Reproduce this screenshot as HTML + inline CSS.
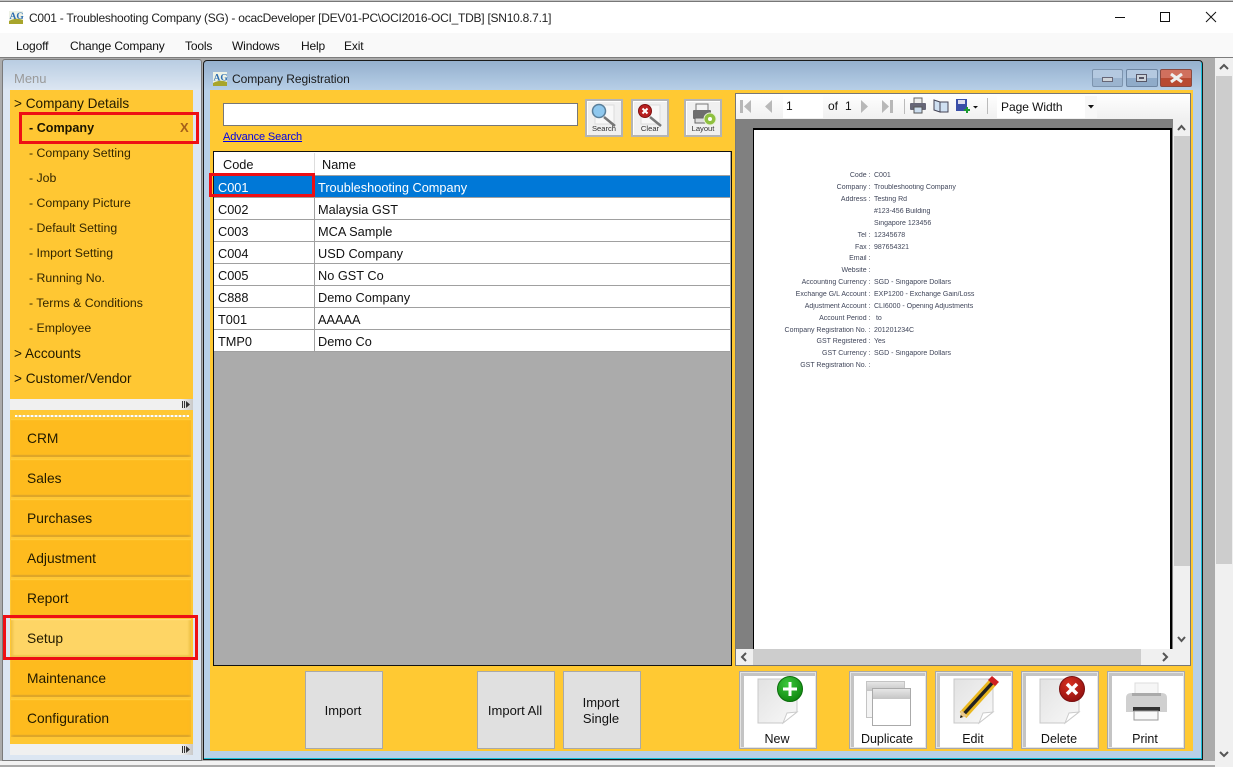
<!DOCTYPE html>
<html><head><meta charset="utf-8"><title>Company Registration</title>
<style>
html,body{margin:0;padding:0;width:1233px;height:767px;overflow:hidden;background:#fff}
body{position:relative;font-family:"Liberation Sans",sans-serif;font-size:13px;color:#111}
.b{position:absolute;box-sizing:border-box}
.t{position:absolute;white-space:nowrap;line-height:16px}
.nav{position:absolute;left:11px;width:180px;height:38px;box-sizing:border-box;background:#febb1e;box-shadow:inset 0 2px 1px -1px #ffd040,inset 2px 0 2px -1px #f6b92a,inset -2px 0 2px -1px #f6b92a,inset 0 -3px 1px -1px #d9a32c;font-size:13.8px;line-height:40px;padding-left:16px;color:#221a00}
.ib{position:absolute;top:671px;width:78px;height:78px;box-sizing:border-box;background:#fff;border:1px solid #a8a8a8;box-shadow:inset 0 0 0 1px #e4e4e4,inset 4px 4px 0 #c4c4c4}
.ib span{position:absolute;left:0;right:2px;bottom:1px;text-align:center;line-height:16px;color:#111;font-size:12.5px}
.ib svg{position:absolute;left:0;top:0}
.gb{position:absolute;top:671px;width:78px;height:78px;box-sizing:border-box;background:#e0e0e0;border:1px solid #a9a9a9;display:flex;align-items:center;justify-content:center;text-align:center;line-height:16px;padding:1px 2px 0 0}
.sb{position:absolute;top:99px;width:38px;height:38px;box-sizing:border-box;background:#f0f0f0;border:2px solid #b4b4b4;box-shadow:inset 1px 1px 0 #fff}
.sb span{position:absolute;left:0;right:0;top:22px;text-align:center;font-size:7.6px;line-height:11px;color:#333}
.sb svg{position:absolute;left:0;top:0}
.m{font-size:12px;letter-spacing:-.15px}
.s{font-size:12.3px;color:#332600}
.h{font-size:13.6px;color:#221a00}
.r{position:absolute;left:214px;width:516px;height:22px;border-bottom:1px solid #a0a0a0;box-sizing:border-box;background:#fff;line-height:23px;font-size:12.75px}
.r i{position:absolute;left:100px;top:0;width:1px;height:22px;background:#a0a0a0}
.r b{font-weight:normal;position:absolute;left:4px;white-space:nowrap}
.r u{text-decoration:none;position:absolute;left:104px;white-space:nowrap}
.rl,.rv{position:absolute;font-size:7px;line-height:12px;white-space:nowrap;color:#40465a;filter:blur(.3px)}
.rl{right:362.5px;text-align:right}
.rv{left:874px}
.red{position:absolute;box-sizing:border-box;border:3px solid #ee0f14}
</style></head><body>

<div class="b" style="left:0;top:0;width:1233px;height:2px;background:#c4c4c4;border-bottom:1px solid #777"></div>
<svg class="b" style="left:8px;top:10px" width="16" height="14" viewBox="0 0 16 14"><rect x="1" y="1" width="14" height="12" fill="#eef2e6"/><text x="1.5" y="9" font-family="Liberation Serif" font-weight="bold" font-size="9.5" fill="#2f6fb0">AG</text><path d="M1 11Q8 7 15 10V14H1Z" fill="#a8a52c"/></svg>
<div class="t" style="left:29px;top:10px;font-size:12px;letter-spacing:-.25px;color:#222">C001 - Troubleshooting Company (SG) - ocacDeveloper [DEV01-PC\OCI2016-OCI_TDB] [SN10.8.7.1]</div>
<svg class="b" style="left:1110px;top:10px" width="110" height="16" viewBox="0 0 110 16" fill="none" stroke="#111" stroke-width="1"><path d="M5 7.5H15"/><rect x="50.5" y="2.5" width="9" height="9"/><path d="M96 2L106 12M106 2L96 12"/></svg>

<div class="b" style="left:0;top:33px;width:1233px;height:25px;background:#f9f9f9;border-bottom:1px solid #7d7d7d"></div>
<div class="t m" style="left:16px;top:38px">Logoff</div>
<div class="t m" style="left:70px;top:38px">Change Company</div>
<div class="t m" style="left:185px;top:38px">Tools</div>
<div class="t m" style="left:232px;top:38px">Windows</div>
<div class="t m" style="left:301px;top:38px">Help</div>
<div class="t m" style="left:344px;top:38px">Exit</div>

<!-- left panel -->
<div class="b" style="left:0;top:58px;width:1233px;height:703px;background:#ababab"></div>
<div class="b" style="left:2px;top:59px;width:200px;height:702px;background:linear-gradient(#b9cde2,#dce6f2 30px);border:1px solid #7a7a7a;border-radius:3px 3px 0 0"></div>
<div class="t" style="left:14px;top:71px;color:#9a9a9a">Menu</div>
<div class="b" style="left:10px;top:90px;width:183px;height:309px;background:#ffc733"></div>
<div class="t h" style="left:14px;top:96px">&gt; Company Details</div>
<div class="t" style="left:29px;top:120px;font-weight:bold;font-size:12.6px;color:#1a1400">- Company</div>
<div class="t" style="left:180px;top:120px;font-weight:bold;color:#a5601a">X</div>
<div class="t s" style="left:29px;top:145px">- Company Setting</div>
<div class="t s" style="left:29px;top:170px">- Job</div>
<div class="t s" style="left:29px;top:195px">- Company Picture</div>
<div class="t s" style="left:29px;top:220px">- Default Setting</div>
<div class="t s" style="left:29px;top:245px">- Import Setting</div>
<div class="t s" style="left:29px;top:270px">- Running No.</div>
<div class="t s" style="left:29px;top:295px">- Terms &amp; Conditions</div>
<div class="t s" style="left:29px;top:320px">- Employee</div>
<div class="t h" style="left:14px;top:346px">&gt; Accounts</div>
<div class="t h" style="left:14px;top:371px">&gt; Customer/Vendor</div>
<div class="b" style="left:10px;top:399px;width:183px;height:11px;background:#f0f0f0"></div>
<div class="b" style="left:181px;top:399px;width:12px;height:11px;background:linear-gradient(90deg,#f0f0f0,#c8c8c8)"></div>
<svg class="b" style="left:182px;top:401px" width="9" height="7"><path d="M0 0H1V7H0ZM2 0H3V7H2ZM4 0L8 3.5L4 7Z" fill="#333"/></svg>
<div class="b" style="left:10px;top:410px;width:183px;height:345px;background:#ffc733"></div>
<div class="b" style="left:15px;top:415px;width:174px;height:2px;background-image:repeating-linear-gradient(90deg,#fff 0 2px,#e8d8a0 2px 4px)"></div>
<div class="nav" style="top:419px">CRM</div>
<div class="nav" style="top:459px">Sales</div>
<div class="nav" style="top:499px">Purchases</div>
<div class="nav" style="top:539px">Adjustment</div>
<div class="nav" style="top:579px">Report</div>
<div class="nav" style="top:619px;background:#fed565;box-shadow:inset 0 2px 1px -1px #fedf85,inset 3px 0 2px -1px #eec048,inset -3px 0 2px -1px #eec048,inset 0 -3px 1px -1px #f0c850">Setup</div>
<div class="nav" style="top:659px">Maintenance</div>
<div class="nav" style="top:699px">Configuration</div>
<div class="b" style="left:10px;top:744px;width:183px;height:11px;background:#f0f0f0"></div>
<div class="b" style="left:181px;top:744px;width:12px;height:11px;background:linear-gradient(90deg,#f0f0f0,#c8c8c8)"></div>
<svg class="b" style="left:182px;top:746px" width="9" height="7"><path d="M0 0H1V7H0ZM2 0H3V7H2ZM4 0L8 3.5L4 7Z" fill="#333"/></svg>

<!-- window -->
<div class="b" style="left:203px;top:60px;width:1000px;height:700px;background:linear-gradient(#95b0ce,#b8d0e8 30px);border:1px solid #1a1a1a;box-shadow:inset -1px -1px 0 #19c0d8;border-radius:4px 4px 0 0"></div>
<svg class="b" style="left:212px;top:71px" width="16" height="15" viewBox="0 0 16 15"><rect x="1" y="1" width="14" height="13" fill="#eef2e6"/><text x="1.5" y="9.5" font-family="Liberation Serif" font-weight="bold" font-size="9.5" fill="#2f6fb0">AG</text><path d="M1 12Q8 8 15 11V15H1Z" fill="#a8a52c"/></svg>
<div class="t" style="left:232px;top:71px;font-size:12px;letter-spacing:-.05px;color:#1a1a1a">Company Registration</div>
<div class="b" style="left:1092px;top:69px;width:31px;height:18px;border:1px solid #7d94ae;border-radius:2px;background:linear-gradient(#b4c9e0 50%,#9bb4cf 50%)"></div>
<div class="b" style="left:1102px;top:77px;width:11px;height:5px;background:#cfd4d9;border:1px solid #667"></div>
<div class="b" style="left:1126px;top:69px;width:32px;height:18px;border:1px solid #6e86a2;border-radius:2px;background:linear-gradient(#b4c9e0 50%,#8fabc9 50%)"></div>
<div class="b" style="left:1136px;top:74px;width:11px;height:8px;background:#d8dde2;border:1px solid #556;box-shadow:inset 0 0 0 2px #ccd3da,inset 0 0 0 3px #556"></div>
<div class="b" style="left:1160px;top:69px;width:32px;height:18px;border:1px solid #8a4a40;border-radius:2px;background:linear-gradient(#d0705e 50%,#b84a32 50%)"></div>
<svg class="b" style="left:1169px;top:73px" width="15" height="10"><path d="M2 1L13 9M13 1L2 9" stroke="#eee" stroke-width="3"/></svg>

<div class="b" style="left:210px;top:90px;width:983px;height:661px;background:#ffc933"></div>

<!-- search -->
<div class="b" style="left:223px;top:103px;width:355px;height:23px;background:#fff;border:1px solid #777"></div>
<div class="t" style="left:223px;top:129px;font-size:11px;letter-spacing:-.12px;color:#0000e8;text-decoration:underline">Advance Search</div>
<div class="sb" style="left:585px"><svg width="34" height="34"><rect x="8" y="4" width="19" height="19" fill="#f8f8f8" stroke="#ddd"/><path d="M17 16L28 25" stroke="#777" stroke-width="2.5"/><circle cx="12" cy="10" r="6.5" fill="#8fc8ee" stroke="#5a7f9a" stroke-width="1.5"/></svg><span>Search</span></div>
<div class="sb" style="left:631px"><svg width="34" height="34"><rect x="8" y="4" width="19" height="19" fill="#f8f8f8" stroke="#ddd"/><path d="M17 16L28 25" stroke="#777" stroke-width="2.5"/><circle cx="12" cy="10" r="6.5" fill="#b82020" stroke="#801010"/><path d="M9.5 7.5L14.5 12.5M14.5 7.5L9.5 12.5" stroke="#fff" stroke-width="2"/></svg><span>Clear</span></div>
<div class="sb" style="left:684px"><svg width="34" height="34"><rect x="10" y="3" width="12" height="7" fill="#f4f4f4" stroke="#777"/><rect x="7" y="9" width="18" height="9" rx="1" fill="#6e6e6e"/><rect x="9" y="17" width="13" height="5" fill="#ddd" stroke="#666"/><circle cx="24" cy="18" r="6" fill="#8fc040" stroke="#e8f0d8"/><circle cx="24" cy="18" r="2" fill="#fff"/></svg><span>Layout</span></div>

<!-- table -->
<div class="b" style="left:213px;top:151px;width:519px;height:515px;background:#ababab;border:1px solid #111"></div>
<div class="b" style="left:214px;top:152px;width:516px;height:24px;background:#fff;border-bottom:1px solid #a0a0a0"></div>
<div class="b" style="left:314px;top:153px;width:1px;height:22px;background:#ddd"></div>
<div class="t" style="left:223px;top:157px;font-size:12.75px">Code</div>
<div class="t" style="left:322px;top:157px;font-size:12.75px">Name</div>
<div class="r" style="top:176px;background:#0078d7;color:#fff"><b>C001</b><u>Troubleshooting Company</u></div>
<div class="r" style="top:198px"><b>C002</b><i></i><u>Malaysia GST</u></div>
<div class="r" style="top:220px"><b>C003</b><i></i><u>MCA Sample</u></div>
<div class="r" style="top:242px"><b>C004</b><i></i><u>USD Company</u></div>
<div class="r" style="top:264px"><b>C005</b><i></i><u>No GST Co</u></div>
<div class="r" style="top:286px"><b>C888</b><i></i><u>Demo Company</u></div>
<div class="r" style="top:308px"><b>T001</b><i></i><u>AAAAA</u></div>
<div class="r" style="top:330px"><b>TMP0</b><i></i><u>Demo Co</u></div>

<!-- report viewer -->
<div class="b" style="left:735px;top:93px;width:456px;height:573px;background:#f0f0f0;border:1px solid #777"></div>
<div class="b" style="left:736px;top:94px;width:454px;height:25px;background:linear-gradient(#fff,#f0f0f0)"></div>
<div class="b" style="left:736px;top:119px;width:437px;height:530px;background:#808080"></div>
<div class="b" style="left:753px;top:128px;width:419px;height:521px;background:#fff;border:1px solid #000;border-width:2px 2px 0 1px"></div>
<div class="b" style="left:783px;top:94px;width:40px;height:24px;background:#fff"></div>
<div class="t" style="left:786px;top:98px;font-size:12px;color:#111">1</div>
<div class="t" style="left:828px;top:98px;font-size:12px">of</div>
<div class="t" style="left:845px;top:98px;font-size:12px">1</div>
<svg class="b" style="left:738px;top:99px" width="170" height="16" fill="#b8b8b8"><path d="M2 1H5V14H2ZM6 7.5L13 1V14Z"/><path d="M27 7.5L34 1V14Z"/><path d="M123 1L130 7.5L123 14Z"/><path d="M144 1L151 7.5L144 14ZM152 1H155V14H152Z"/><path d="M166 0H167V15H166Z" fill="#bbb"/></svg>
<svg class="b" style="left:909px;top:97px" width="75" height="18"><rect x="5" y="1" width="8" height="6" fill="#eee" stroke="#666"/><rect x="1" y="6" width="16" height="7" rx="1" fill="#667"/><rect x="5" y="10" width="8" height="6" fill="#cde" stroke="#555"/><path d="M25 3L31 5V15L25 13ZM31 5H39V15H31" fill="#cfe0f2" stroke="#445"/><rect x="47" y="2" width="11" height="12" fill="#3a4fa8"/><rect x="49" y="3" width="7" height="4" fill="#dde"/><path d="M55 13H61M58 10V16" stroke="#1c9a30" stroke-width="2"/><path d="M64 9H69L66.5 11.5Z" fill="#111"/></svg>
<div class="b" style="left:987px;top:98px;width:1px;height:16px;background:#bbb"></div>
<div class="b" style="left:997px;top:96px;width:88px;height:22px;background:#fff"></div>
<div class="b" style="left:1085px;top:96px;width:12px;height:22px;background:#f7f7f7"></div>
<div class="t" style="left:1001px;top:99px;font-size:12px;letter-spacing:-.05px">Page Width</div>
<svg class="b" style="left:1088px;top:105px" width="7" height="4"><path d="M0 0H6L3 3.5Z" fill="#111"/></svg>

<!-- inner scrollbars -->
<div class="b" style="left:1173px;top:119px;width:17px;height:530px;background:#f0f0f0"></div>
<div class="b" style="left:1174px;top:136px;width:16px;height:430px;background:#cdcdcd"></div>
<svg class="b" style="left:1173px;top:119px" width="17" height="530" fill="none" stroke="#555" stroke-width="2"><path d="M5 11L8.5 7L12 11M5 518L8.5 522L12 518"/></svg>
<div class="b" style="left:736px;top:649px;width:454px;height:16px;background:#f0f0f0"></div>
<div class="b" style="left:753px;top:649px;width:388px;height:16px;background:#cdcdcd"></div>
<svg class="b" style="left:736px;top:649px" width="440" height="16" fill="none" stroke="#555" stroke-width="2"><path d="M10 4L6 8L10 12M427 4L431 8L427 12"/></svg>

<!-- report text -->
<div class="rl" style="top:170px">Code :</div><div class="rv" style="top:170px">C001</div>
<div class="rl" style="top:182px">Company :</div><div class="rv" style="top:182px">Troubleshooting Company</div>
<div class="rl" style="top:194px">Address :</div><div class="rv" style="top:194px">Testing Rd</div>
<div class="rv" style="top:206px">#123-456 Building</div>
<div class="rv" style="top:218px">Singapore 123456</div>
<div class="rl" style="top:230px">Tel :</div><div class="rv" style="top:230px">12345678</div>
<div class="rl" style="top:242px">Fax :</div><div class="rv" style="top:242px">987654321</div>
<div class="rl" style="top:253px">Email :</div>
<div class="rl" style="top:265px">Website :</div>
<div class="rl" style="top:277px">Accounting Currency :</div><div class="rv" style="top:277px">SGD - Singapore Dollars</div>
<div class="rl" style="top:289px">Exchange G/L Account :</div><div class="rv" style="top:289px">EXP1200 - Exchange Gain/Loss</div>
<div class="rl" style="top:301px">Adjustment Account :</div><div class="rv" style="top:301px">CLI6000 - Opening Adjustments</div>
<div class="rl" style="top:313px">Account Period :</div><div class="rv" style="top:313px">&nbsp;to</div>
<div class="rl" style="top:325px">Company Registration No. :</div><div class="rv" style="top:325px">201201234C</div>
<div class="rl" style="top:336px">GST Registered :</div><div class="rv" style="top:336px">Yes</div>
<div class="rl" style="top:348px">GST Currency :</div><div class="rv" style="top:348px">SGD - Singapore Dollars</div>
<div class="rl" style="top:360px">GST Registration No. :</div>

<!-- bottom buttons -->
<div class="gb" style="left:305px">Import</div>
<div class="gb" style="left:477px">Import All</div>
<div class="gb" style="left:563px">Import<br>Single</div>

<svg width="0" height="0" style="position:absolute"><defs><linearGradient id="pg" x1="0" y1="0" x2="1" y2="1"><stop offset="0" stop-color="#e2e2e2"/><stop offset="1" stop-color="#f8f8f8"/></linearGradient><linearGradient id="tb" x1="0" y1="0" x2="0" y2="1"><stop offset="0" stop-color="#e6e6e6"/><stop offset="1" stop-color="#c4c4c4"/></linearGradient><radialGradient id="gc" cx=".4" cy=".3" r=".8"><stop offset="0" stop-color="#3cc83c"/><stop offset="1" stop-color="#0a800a"/></radialGradient><radialGradient id="rc" cx=".4" cy=".3" r=".8"><stop offset="0" stop-color="#d83020"/><stop offset="1" stop-color="#8c0e0e"/></radialGradient></defs></svg>

<div class="ib" style="left:739px"><svg width="76" height="56"><path d="M18 7H57V40L43 51H18Z" fill="url(#pg)" stroke="#c8c8c8"/><path d="M43 51L47 41L57 40Z" fill="#fff" stroke="#ccc"/><circle cx="50" cy="17" r="12.5" fill="url(#gc)" stroke="#0c6c0c"/><path d="M50 10V24M43 17H57" stroke="#fff" stroke-width="3"/></svg><span>New</span></div>
<div class="ib" style="left:849px"><svg width="76" height="56"><rect x="16.500" y="9.500" width="38" height="36" fill="#f4f4f4" stroke="#c4c4c4"/><rect x="17" y="10" width="37" height="9" fill="url(#tb)"/><rect x="22.500" y="16.500" width="38" height="37" fill="#fff" stroke="#aaa"/><rect x="23" y="17" width="37" height="10" fill="url(#tb)"/></svg><span>Duplicate</span></div>
<div class="ib" style="left:935px"><svg width="76" height="56"><path d="M18 7H57V40L43 51H18Z" fill="url(#pg)" stroke="#c8c8c8"/><path d="M43 51L47 41L57 40Z" fill="#fff" stroke="#ccc"/><path d="M27 43L58 9" stroke="#eab820" stroke-width="9"/><path d="M27 43L58 9" stroke="#222" stroke-width="3.500"/><path d="M56 4L63 10L59 14L52 8Z" fill="#d02020"/><path d="M24 46L25 38L32 44Z" fill="#e8c88a"/><path d="M24 46L24.800 43L27 45Z" fill="#111"/></svg><span>Edit</span></div>
<div class="ib" style="left:1021px"><svg width="76" height="56"><path d="M18 7H57V40L43 51H18Z" fill="url(#pg)" stroke="#c8c8c8"/><path d="M43 51L47 41L57 40Z" fill="#fff" stroke="#ccc"/><circle cx="50" cy="17" r="12.5" fill="url(#rc)" stroke="#7a1010"/><path d="M45 12L55 22M55 12L45 22" stroke="#fff" stroke-width="3.500"/></svg><span>Delete</span></div>
<div class="ib" style="left:1107px"><svg width="76" height="56"><rect x="27" y="11" width="23" height="13" fill="#f6f6f6" stroke="#ddd"/><path d="M18 26Q18 21 23 21H54Q59 21 59 26V40H18Z" fill="#d0d0d0"/><path d="M24 21H53V24H24Z" fill="#aaa"/><rect x="25" y="35" width="27" height="4" fill="#333"/><rect x="26" y="39" width="24" height="9" fill="#f8f8f8" stroke="#999"/></svg><span>Print</span></div>

<!-- main scrollbar -->
<div class="b" style="left:1215px;top:58px;width:18px;height:709px;background:#f0f0f0"></div>
<div class="b" style="left:1216px;top:76px;width:16px;height:488px;background:#cdcdcd"></div>
<svg class="b" style="left:1215px;top:58px" width="18" height="709" fill="none" stroke="#555" stroke-width="2"><path d="M5 11L9 7L13 11M5 694L9 698L13 694"/></svg>

<div class="b" style="left:0;top:761px;width:1215px;height:6px;background:#f2f2f2;border-bottom:2px solid #aaa"></div>

<!-- highlights -->
<div class="red" style="left:19px;top:112px;width:180px;height:32px"></div>
<div class="red" style="left:209px;top:173px;width:106px;height:24px"></div>
<div class="red" style="left:3px;top:615px;width:195px;height:45px"></div>
</body></html>
